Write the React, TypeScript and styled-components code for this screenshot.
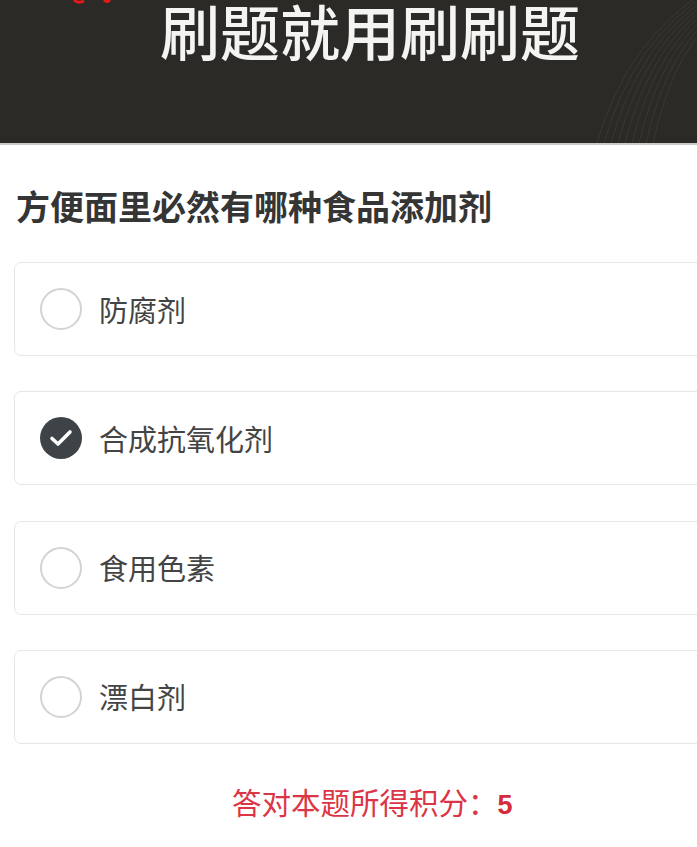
import React from "react";
import styled, { createGlobalStyle } from "styled-components";

const GlobalStyle = createGlobalStyle`
  html, body { margin: 0; padding: 0; background: #ffffff; }
  body {
    font-family: "Noto Sans CJK SC", "Noto Sans", sans-serif;
    overflow: hidden;
  }
`;

const Page = styled.div`
  width: 697px;
  min-height: 847px;
  background: #ffffff;
  overflow: hidden;
`;

const Header = styled.header`
  position: relative;
  height: 143px;
  background: #2b2a26;
  border-bottom: 2px solid #c9c9c7;
  overflow: hidden;
`;

const Title = styled.h1`
  margin: 0;
  padding-left: 160px;
  font-size: 60px;
  line-height: 60px;
  font-weight: 500;
  color: #f4f4f2;
  white-space: nowrap;
`;

const Arcs = styled.svg`
  position: absolute;
  right: 0;
  top: 0;
  width: 140px;
  height: 143px;
`;

const LogoBits = styled.svg`
  position: absolute;
  left: 60px;
  top: 0;
  width: 60px;
  height: 8px;
`;

const Content = styled.main`
  padding: 44px 0 0 0;
`;

const Question = styled.h2`
  margin: 0 0 39px 16px;
  font-size: 34px;
  line-height: 34px;
  font-weight: 700;
  color: #353535;
  white-space: nowrap;
`;

const Options = styled.div`
  display: flex;
  flex-direction: column;
  gap: 35.3px;
  margin-left: 14px;
  margin-right: -20px;
`;

const Card = styled.div`
  height: 94px;
  box-sizing: border-box;
  border: 1px solid #e7e7e7;
  border-radius: 7px;
  background: #ffffff;
  display: flex;
  align-items: center;
  padding-left: 25px;
  gap: 17px;
`;

const Radio = styled.span<{ $checked?: boolean }>`
  width: 42px;
  height: 42px;
  box-sizing: border-box;
  border-radius: 50%;
  border: ${(p) => (p.$checked ? "none" : "2px solid #d3d3d3")};
  background: ${(p) => (p.$checked ? "#3d4346" : "#ffffff")};
  display: flex;
  align-items: center;
  justify-content: center;
  flex-shrink: 0;
`;

const OptionText = styled.span`
  font-size: 29px;
  line-height: 29px;
  color: #444444;
  font-weight: 400;
`;

const Score = styled.p`
  margin: 42px 0 0 0;
  padding-left: 232px;
  font-size: 29.5px;
  line-height: 30px;
  color: #dc3545;
  white-space: nowrap;
`;

const ScoreNum = styled.span`
  font-family: "Liberation Sans", Arial, sans-serif;
  font-weight: 700;
  font-size: 27px;
  color: #d62b3a;
`;

const options = [
  { label: "防腐剂", checked: false },
  { label: "合成抗氧化剂", checked: true },
  { label: "食用色素", checked: false },
  { label: "漂白剂", checked: false },
];

export default function App() {
  return (
    <Page>
      <GlobalStyle />
      <Header>
        <LogoBits viewBox="0 0 60 8">
          <path d="M14 0 Q18 4 24 1" stroke="#e01a1a" strokeWidth="3" fill="none" />
          <path d="M44 0 Q47 3 50 0" stroke="#e01a1a" strokeWidth="3" fill="none" />
        </LogoBits>
        <Title>刷题就用刷刷题</Title>
        <Arcs viewBox="0 0 140 143">
          {Array.from({ length: 9 }).map((_, i) => (
            <path
              key={i}
              d={`M${40 + i * 7} 143 Q${70 + i * 6} 40 ${150 + i * 3} ${-10 + i * 2}`}
              stroke="#3c3b37"
              strokeWidth="1"
              fill="none"
              opacity={0.8}
            />
          ))}
        </Arcs>
      </Header>
      <Content>
        <Question>方便面里必然有哪种食品添加剂</Question>
        <Options>
          {options.map((o) => (
            <Card key={o.label}>
              <Radio $checked={o.checked}>
                {o.checked && (
                  <svg width="28" height="28" viewBox="0 0 28 28">
                    <path
                      d="M5 14.5 L11 20 L23 8"
                      stroke="#ffffff"
                      strokeWidth="3.6"
                      fill="none"
                      strokeLinecap="round"
                      strokeLinejoin="round"
                    />
                  </svg>
                )}
              </Radio>
              <OptionText>{o.label}</OptionText>
            </Card>
          ))}
        </Options>
        <Score>
          答对本题所得积分：<ScoreNum>5</ScoreNum>
        </Score>
      </Content>
    </Page>
  );
}
